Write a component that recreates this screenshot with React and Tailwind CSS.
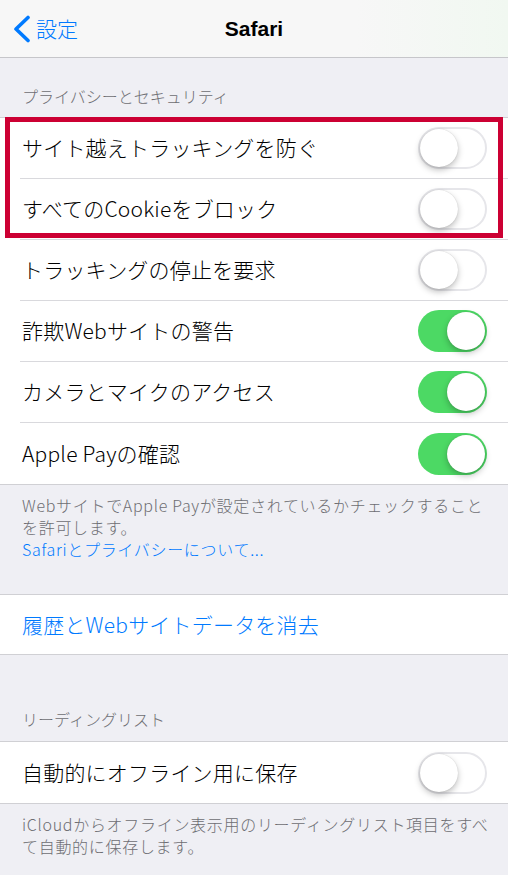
import React from 'react';

const FONT = { fontFamily: '"Noto Sans CJK JP", "Liberation Sans", sans-serif' };

function Toggle({ on }) {
  return (
    <div
      className={`relative w-[69px] h-[42px] rounded-full shrink-0 ${
        on ? 'bg-[#4cd964]' : 'bg-white border-2 border-[#e6e6ea]'
      }`}
    >
      <div
        className={`absolute top-1/2 -translate-y-1/2 w-[38px] h-[38px] rounded-full bg-white shadow-[0_3px_6px_rgba(0,0,0,0.25),0_0_1px_rgba(0,0,0,0.2)] ${
          on ? 'right-[2px]' : 'left-0'
        }`}
      />
    </div>
  );
}

function Row({ label, on, last }) {
  return (
    <div className="h-[61px] pl-[20px] flex flex-col">
      <div className="flex-1 flex items-center justify-between pl-[2px] pr-[21px]">
        <span className="text-[21px] font-light tracking-[0.2px] text-black">{label}</span>
        <Toggle on={on} />
      </div>
      {!last && <div className="h-px bg-[#d9d9dd]" />}
    </div>
  );
}

export default function App() {
  const privacy = [
    { label: 'サイト越えトラッキングを防ぐ', on: false },
    { label: 'すべてのCookieをブロック', on: false },
    { label: 'トラッキングの停止を要求', on: false },
    { label: '詐欺Webサイトの警告', on: true },
    { label: 'カメラとマイクのアクセス', on: true },
    { label: 'Apple Payの確認', on: true },
  ];

  return (
    <div className="w-[508px] h-[875px] overflow-hidden bg-[#efeff4]" style={FONT}>
      {/* Nav bar */}
      <div className="h-[58px] bg-[linear-gradient(90deg,#f7f7f7_0%,#f7f7f7_70%,#f1f8f1_100%)] border-b border-[#c6c6ca] flex items-center relative">
        <div className="flex items-center pl-[12px] gap-[5px] text-[#007aff]">
          <svg width="19" height="28" viewBox="0 0 19 28" fill="none">
            <polyline points="16,2.5 4,14 16,25.5" stroke="#007aff" strokeWidth="3.6" strokeLinecap="round" strokeLinejoin="round" />
          </svg>
          <span className="text-[21px] font-light">設定</span>
        </div>
        <div className="absolute inset-0 flex items-center justify-center pointer-events-none">
          <span className="text-[21px] font-bold text-black" style={{ fontFamily: '"Liberation Sans", sans-serif' }}>
            Safari
          </span>
        </div>
      </div>

      {/* Privacy header */}
      <div className="h-[59px] flex items-end pb-[9px] pl-[22px]">
        <span className="text-[16px] font-light text-[#6d6d72]">プライバシーとセキュリティ</span>
      </div>

      {/* Privacy group */}
      <div className="relative bg-white border-y border-[#d0d0d4]">
        {privacy.map((item, i) => (
          <Row key={item.label} label={item.label} on={item.on} last={i === privacy.length - 1} />
        ))}
        {/* highlight box */}
        <div className="absolute left-[5px] right-[5px] top-[-1px] h-[121px] border-[5px] border-[#cc0033] pointer-events-none" />
      </div>

      {/* Privacy footer */}
      <div className="pt-[9px] pb-[34px] pl-[22px] pr-[20px] text-[16px] leading-[22px] font-light tracking-[0.7px] text-[#6d6d72]">
        <p>WebサイトでApple Payが設定されているかチェックすることを許可します。</p>
        <p className="text-[#007aff]">Safariとプライバシーについて...</p>
      </div>

      {/* Clear history */}
      <div className="h-[61px] bg-white border-y border-[#d0d0d4] flex items-center pl-[22px]">
        <span className="text-[21px] font-light tracking-[0.2px] text-[#007aff]">履歴とWebサイトデータを消去</span>
      </div>

      {/* Reading list header */}
      <div className="h-[86px] flex items-end pb-[10px] pl-[22px]">
        <span className="text-[16px] font-light text-[#6d6d72]">リーディングリスト</span>
      </div>

      <div className="bg-white border-y border-[#d0d0d4]">
        <Row label="自動的にオフライン用に保存" on={false} last />
      </div>

      <div className="pt-[9px] pl-[22px] pr-[13px] text-[16px] leading-[22px] font-light tracking-[0.7px] text-[#6d6d72]">
        <p>iCloudからオフライン表示用のリーディングリスト項目をすべて自動的に保存します。</p>
      </div>
    </div>
  );
}
